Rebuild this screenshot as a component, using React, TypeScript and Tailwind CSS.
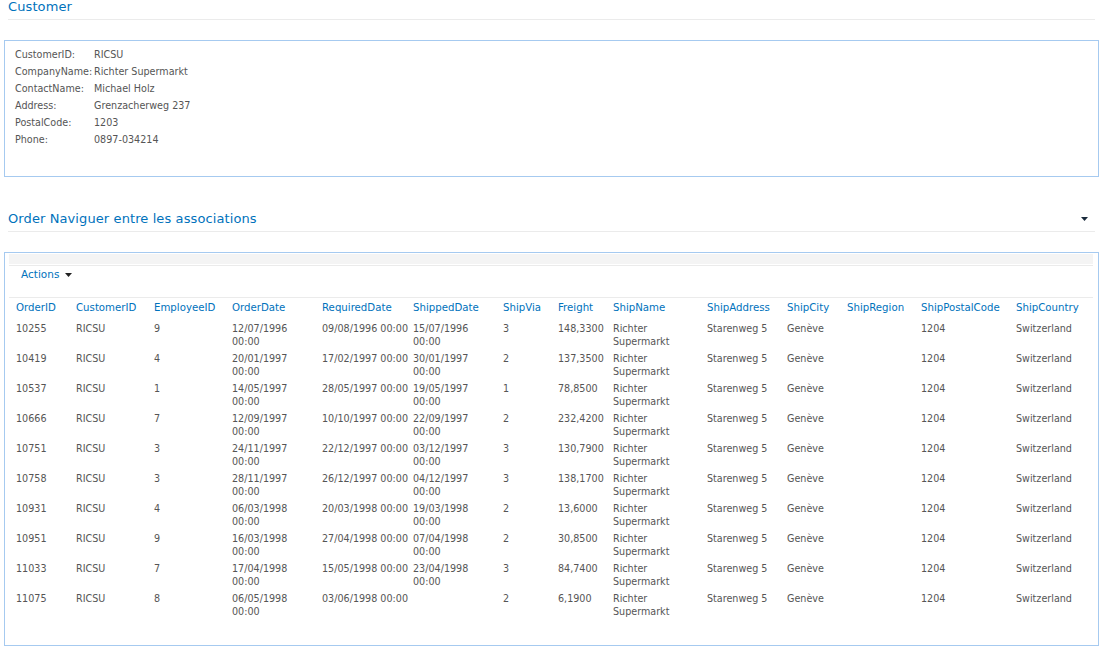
const orders = [
  ['10255', '9', '12/07/1996 00:00', '09/08/1996 00:00', '15/07/1996 00:00', '3', '148,3300'],
  ['10419', '4', '20/01/1997 00:00', '17/02/1997 00:00', '30/01/1997 00:00', '2', '137,3500'],
  ['10537', '1', '14/05/1997 00:00', '28/05/1997 00:00', '19/05/1997 00:00', '1', '78,8500'],
  ['10666', '7', '12/09/1997 00:00', '10/10/1997 00:00', '22/09/1997 00:00', '2', '232,4200'],
  ['10751', '3', '24/11/1997 00:00', '22/12/1997 00:00', '03/12/1997 00:00', '3', '130,7900'],
  ['10758', '3', '28/11/1997 00:00', '26/12/1997 00:00', '04/12/1997 00:00', '3', '138,1700'],
  ['10931', '4', '06/03/1998 00:00', '20/03/1998 00:00', '19/03/1998 00:00', '2', '13,6000'],
  ['10951', '9', '16/03/1998 00:00', '27/04/1998 00:00', '07/04/1998 00:00', '2', '30,8500'],
  ['11033', '7', '17/04/1998 00:00', '15/05/1998 00:00', '23/04/1998 00:00', '3', '84,7400'],
  ['11075', '8', '06/05/1998 00:00', '03/06/1998 00:00', '', '2', '6,1900'],
];

const columns = [
  { name: 'OrderID', w: 'w-[60px]' },
  { name: 'CustomerID', w: 'w-[78px]' },
  { name: 'EmployeeID', w: 'w-[78px]' },
  { name: 'OrderDate', w: 'w-[90px]' },
  { name: 'RequiredDate', w: 'w-[91px]' },
  { name: 'ShippedDate', w: 'w-[90px]' },
  { name: 'ShipVia', w: 'w-[55px]' },
  { name: 'Freight', w: 'w-[55px]' },
  { name: 'ShipName', w: 'w-[94px]' },
  { name: 'ShipAddress', w: 'w-[80px]' },
  { name: 'ShipCity', w: 'w-[60px]' },
  { name: 'ShipRegion', w: 'w-[74px]' },
  { name: 'ShipPostalCode', w: 'w-[95px]' },
  { name: 'ShipCountry', w: 'w-[77px]' },
];

const customer = [
  ['CustomerID:', 'RICSU'],
  ['CompanyName:', 'Richter Supermarkt'],
  ['ContactName:', 'Michael Holz'],
  ['Address:', 'Grenzacherweg 237'],
  ['PostalCode:', '1203'],
  ['Phone:', '0897-034214'],
];

const Caret = ({ className }: { className?: string }) => (
  <svg className={className} width="7" height="4" viewBox="0 0 7 4">
    <path d="M0 0h7L3.5 4z" fill="currentColor" />
  </svg>
);

export default function App() {
  return (
    <div className="min-h-[647px] bg-white font-['DejaVu_Sans',Verdana,sans-serif] text-[9.6px] text-[#555]">
      {/* Customer header */}
      <div className="mx-2 h-5 border-b border-[#ebebeb] text-[13px] leading-[14px] tracking-[0.1px] text-[#0072bc]">Customer</div>

      <div className="mt-5 ml-1 mr-1 h-[137px] border border-[#a6caf0] px-[10px] pt-[6px]">
        <table className="border-collapse">
          <tbody>
            {customer.map(([k, v]) => (
              <tr key={k} className="h-[17px]">
                <td className="w-[79px] whitespace-nowrap p-0 align-middle">{k}</td>
                <td className="p-0 align-middle">{v}</td>
              </tr>
            ))}
          </tbody>
        </table>
      </div>

      {/* Order header */}
      <div className="mx-2 mt-[31px] flex h-[24px] items-start justify-between border-b border-[#ebebeb] pt-[4px]">
        <span className="text-[13px] leading-[14px] tracking-[0.1px] text-[#0072bc]">Order Naviguer entre les associations</span>
        <Caret className="mt-[5px] mr-[7px] text-[#1a2b3c]" />
      </div>

      <div className="mt-[20px] ml-1 mr-1 h-[394px] border border-[#a6caf0] pt-[1px] pl-[4px] pr-[5px]">
        <div className="h-[10px] bg-[#f4f4f4]" />
        <div className="mt-[1px] h-[32px] border-t border-[#ebebeb] pl-[12px] pt-[2px]">
          <span className="inline-flex items-center gap-[6px] text-[10.5px] leading-[13px] text-[#0072bc]">
            Actions <Caret className="text-[#222]" />
          </span>
        </div>
        <div className="border-t border-[#ebebeb] pl-[7px]">
          <table className="table-fixed border-collapse">
            <thead>
              <tr className="h-[20px]">
                {columns.map((c) => (
                  <th key={c.name} className={`${c.w} p-0 pb-[1px] text-left align-middle font-normal text-[10.2px] text-[#0072bc]`}>
                    {c.name}
                  </th>
                ))}
              </tr>
            </thead>
            <tbody>
              {orders.map((o) => (
                <tr key={o[0]} className="h-[30px] align-top leading-[13px]">
                  <td className="p-0 pt-[4px]">{o[0]}</td>
                  <td className="p-0 pt-[4px]">RICSU</td>
                  <td className="p-0 pt-[4px]">{o[1]}</td>
                  <td className="p-0 pt-[4px] pr-3">{o[2]}</td>
                  <td className="p-0 pt-[4px] whitespace-nowrap">{o[3]}</td>
                  <td className="p-0 pt-[4px] pr-3">{o[4]}</td>
                  <td className="p-0 pt-[4px]">{o[5]}</td>
                  <td className="p-0 pt-[4px]">{o[6]}</td>
                  <td className="p-0 pt-[4px] pr-3">Richter Supermarkt</td>
                  <td className="p-0 pt-[4px]">Starenweg 5</td>
                  <td className="p-0 pt-[4px]">Genève</td>
                  <td className="p-0 pt-[4px]"></td>
                  <td className="p-0 pt-[4px]">1204</td>
                  <td className="p-0 pt-[4px]">Switzerland</td>
                </tr>
              ))}
            </tbody>
          </table>
        </div>
      </div>
    </div>
  );
}
